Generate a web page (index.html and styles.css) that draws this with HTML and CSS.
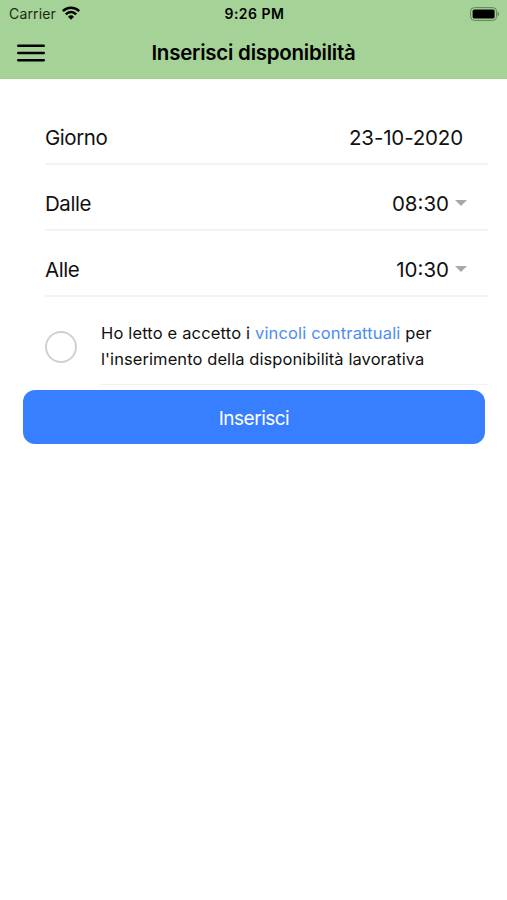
FILE: index.html
```html
<!DOCTYPE html>
<html lang="it">
<head>
<meta charset="utf-8">
<title>Inserisci disponibilità</title>
<link rel="stylesheet" href="styles.css">
</head>
<body>
<header class="header">
  <div class="status">
    <div class="carrier"><span class="carrier-name">Carrier</span>
      <svg class="wifi" width="18" height="14" viewBox="0 0 18 14" fill="none" stroke="#000" stroke-width="2.5"><path d="M.8 5.1a11.6 11.6 0 0 1 16.4 0"/><path d="M3.8 8.3a7.3 7.3 0 0 1 10.4 0"/><path d="M6 10.7a4 4 0 0 1 6 0L9 13.7Z" fill="#000" stroke="none"/></svg>
    </div>
    <div class="clock">9:26 PM</div>
    <svg class="battery" width="30" height="14" viewBox="0 0 30 14"><rect x=".6" y=".6" width="26" height="12.8" rx="3.8" fill="none" stroke="#618356"/><rect x="2.6" y="2.6" width="22" height="8.8" rx="1.6"/><path d="M27.6 4.5q3 2.5 0 5Z" fill="#618356"/></svg>
  </div>
  <div class="toolbar">
    <svg class="menu" width="28" height="18" viewBox="0 0 28 18" stroke="#000" stroke-width="2.4" stroke-linecap="round"><path d="M1.2 1.7h25.6M1.2 9h25.6M1.2 16.3h25.6"/></svg>
    <h1 class="title">Inserisci disponibilità</h1>
    <span></span>
  </div>
</header>
<main class="content">
  <div class="row"><span class="label">Giorno</span><span class="value date">23-10-2020</span></div>
  <div class="row"><span class="label">Dalle</span><span class="value">08:30</span><i class="caret"></i></div>
  <div class="row"><span class="label">Alle</span><span class="value">10:30</span><i class="caret"></i></div>
  <div class="consent">
    <span class="check"></span>
    <p class="terms"><span class="line1">Ho letto e accetto i <a class="link">vincoli contrattuali</a> per</span><br><span class="line2">l'inserimento della disponibilità lavorativa</span></p>
  </div>
  <button class="submit">Inserisci</button>
</main>
</body>
</html>
```
FILE: styles.css
```css
* { box-sizing: border-box; }
body { margin: 0; background: #fff; color: #111; font-family: Inter, sans-serif; }
.header { height: 79px; background: #a5d296; color: #000; border-bottom: 1px solid #a0cc92; }
.status { display: grid; grid-template-columns: 1fr auto 1fr; align-items: center; height: 27px; padding: 0 7px 0 9px; }
.carrier { display: flex; align-items: center; gap: 6px; font-size: 14px; letter-spacing: .15px; color: #1c2a18; }
.wifi { margin-top: -2px; }
.clock { font-size: 14px; font-weight: 600; letter-spacing: .5px; }
.battery { justify-self: end; }
.toolbar { display: grid; grid-template-columns: 1fr auto 1fr; align-items: center; height: 52px; padding: 0 17px; }
.title { margin: -1px 0 0; font-size: 20.5px; font-weight: 600; letter-spacing: -.24px; line-height: 24px; }
.content { padding: 20px 19px 0 45px; }
.row { display: flex; align-items: center; height: 66px; padding: 13px 25px 0 0; border-bottom: 2px solid #f3f3f3; font-size: 20.5px; }
.label { flex: 1; letter-spacing: -.45px; }
.date { letter-spacing: -.15px; }
.caret { width: 0; margin: -1px -4px 0 6px; border: 6px solid transparent; border-top-color: #a8a8a8; border-bottom: 0; }
.consent { display: flex; height: 88px; }
.check { width: 32px; height: 32px; margin: 34px 24px 0 0; border: 2px solid #d0d0d0; border-radius: 50%; }
.terms { flex: 1; margin: 0; padding-top: 23px; font-size: 16.5px; line-height: 26px; white-space: nowrap; border-bottom: 1px solid #f2f2f2; }
.line1 { letter-spacing: .16px; }
.line2 { letter-spacing: .08px; }
.link { color: #4c8cf8; }
.submit { display: block; width: 462px; height: 54px; margin: 5px 0 0 -22px; padding: 2px 0 0; border: 0; border-radius: 12px; background: #387fff; color: #fff; font: 400 19px Inter, sans-serif; letter-spacing: -.5px; }
```
